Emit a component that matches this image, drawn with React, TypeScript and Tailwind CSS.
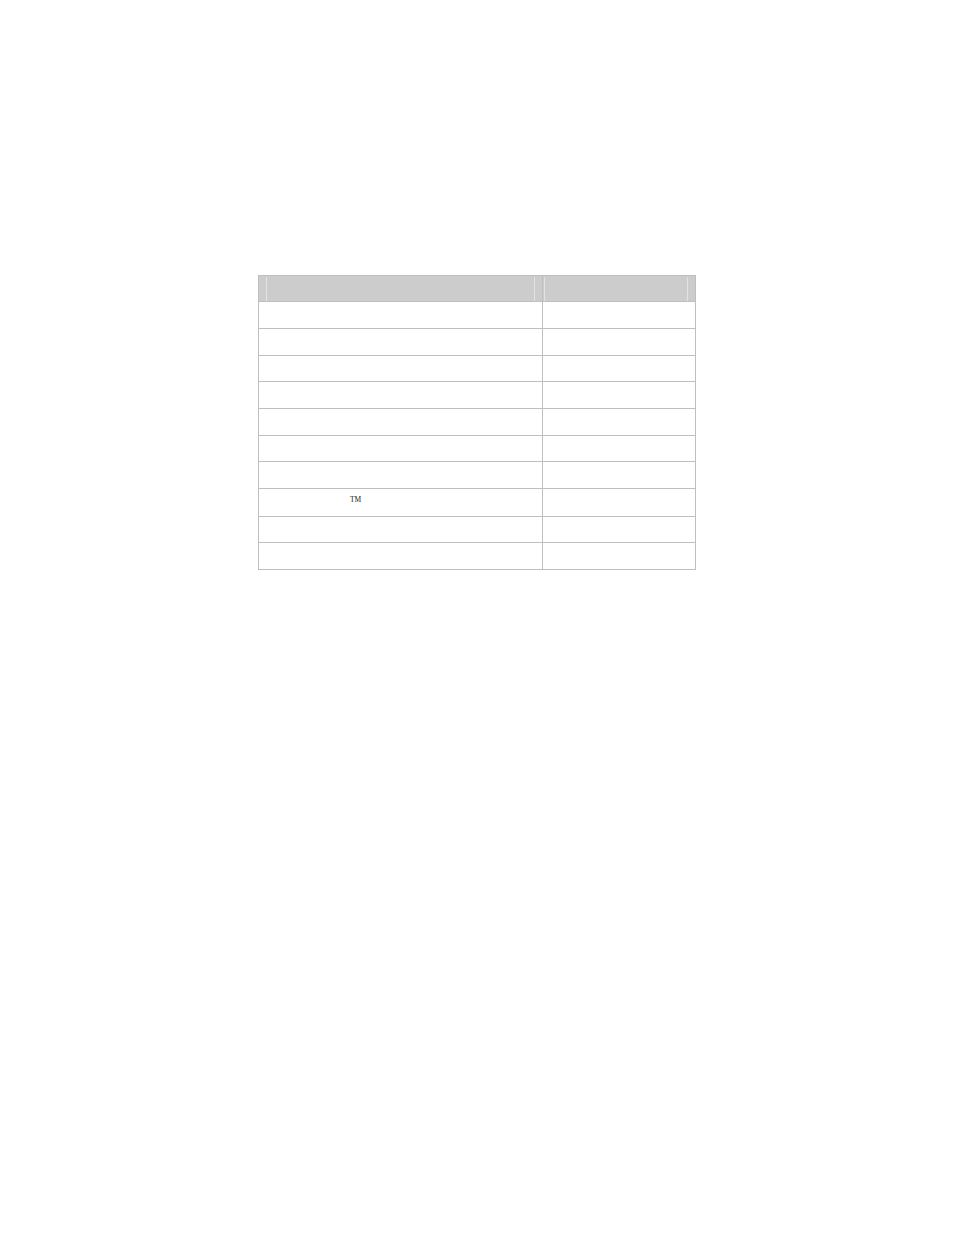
import React from "react";

const rowHeights = [27, 27, 26, 27, 27, 26, 27, 28, 26, 27];

const App: React.FC = () => {
  return (
    <div className="min-h-[1235px] w-full bg-white font-['Liberation_Serif',serif] pt-[275px] pl-[258px]">
      <div className="w-[438px] border border-[#bfbfbf]">
        {/* header */}
        <div className="flex h-[26px] border-b border-[#bfbfbf] bg-[#cccccc]">
          <div className="flex w-[284px] justify-between pl-[7px] pr-[7px] pt-[1px] border-r border-[#bfbfbf]">
            <div className="w-px h-full bg-[#e3e3e3]" />
            <div className="w-px h-full bg-[#e3e3e3]" />
          </div>
          <div className="flex flex-1 justify-between pl-[1px] pr-[7px] pt-[1px]">
            <div className="w-px h-full bg-[#e3e3e3]" />
            <div className="w-px h-full bg-[#e3e3e3]" />
          </div>
        </div>
        {rowHeights.map((h, i) => (
          <div
            key={i}
            className="flex border-b border-[#bfbfbf] last:border-b-0"
            style={{ height: i === rowHeights.length - 1 ? h - 1 : h }}
          >
            <div className="w-[284px] border-r border-[#bfbfbf] pl-[91px]">
              {i === 7 && (
                <span className="block pt-[7px] text-[7.5px] leading-[8px] text-[#222]">TM</span>
              )}
            </div>
            <div className="flex-1" />
          </div>
        ))}
      </div>
    </div>
  );
};

export default App;
